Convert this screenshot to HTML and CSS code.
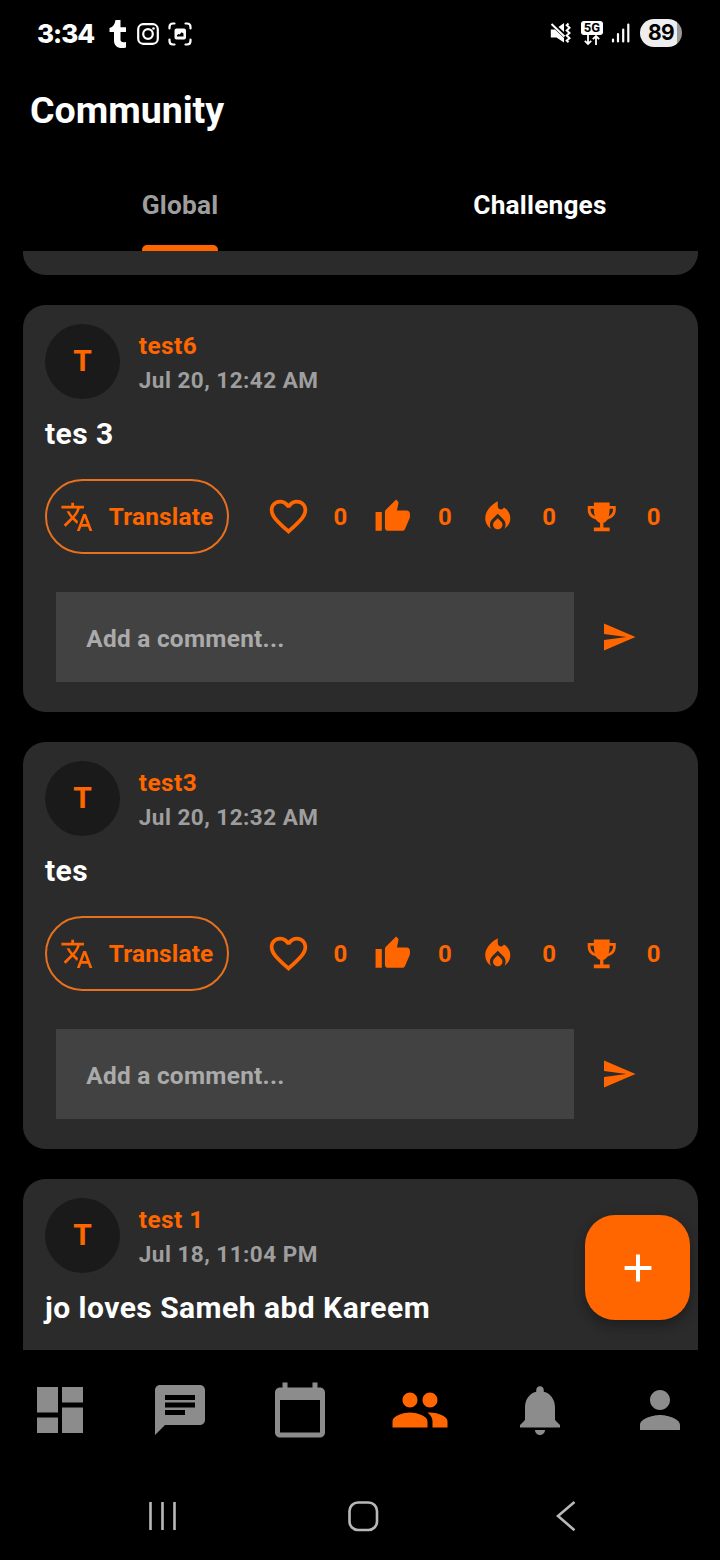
FILE: index.html
```html
<!DOCTYPE html>
<html lang="en">
<head>
<meta charset="utf-8">
<title>Community</title>
<link rel="stylesheet" href="styles.css">
</head>
<body>
<svg class="defs" width="0" height="0">
  <symbol id="translate" viewBox="0 0 24 24"><path d="M12.87 15.07l-2.54-2.51.03-.03c1.74-1.94 2.98-4.17 3.71-6.53H17V4h-7V2H8v2H1v1.99h11.17C11.5 7.92 10.44 9.75 9 11.35 8.07 10.32 7.3 9.19 6.69 8h-2c.73 1.63 1.73 3.17 2.98 4.56l-5.09 5.02L4 19l5-5 3.11 3.11.76-2.04zM18.5 10h-2L12 22h2l1.12-3h4.75L21 22h2l-4.5-12zm-2.62 7l1.62-4.33L19.12 17h-3.24z"/></symbol>
  <symbol id="heart" viewBox="0 0 24 24"><path d="M16.5 3c-1.74 0-3.41.81-4.5 2.09C10.91 3.81 9.24 3 7.5 3 4.42 3 2 5.42 2 8.5c0 3.78 3.4 6.86 8.55 11.54L12 21.35l1.45-1.32C18.6 15.36 22 12.28 22 8.5 22 5.42 19.58 3 16.5 3zm-4.4 15.55l-.1.1-.1-.1C7.14 14.24 4 11.39 4 8.5 4 6.5 5.5 5 7.5 5c1.54 0 3.04.99 3.57 2.36h1.87C13.46 5.99 14.96 5 16.5 5c2 0 3.5 1.5 3.5 3.5 0 2.89-3.14 5.74-7.9 10.05z"/></symbol>
  <symbol id="thumb" viewBox="0 0 24 24"><path d="M1 21h4V9H1v12zm22-11c0-1.1-.9-2-2-2h-6.31l.95-4.57.03-.32c0-.41-.17-.79-.44-1.06L14.17 1 7.59 7.59C7.22 7.95 7 8.45 7 9v10c0 1.1.9 2 2 2h9c.83 0 1.54-.5 1.84-1.22l3.02-7.05c.09-.23.14-.47.14-.73v-2z"/></symbol>
  <symbol id="fire" viewBox="0 0 24 24"><path d="M12 12.9l-2.13 2.09C9.31 15.55 9 16.28 9 17.06 9 18.68 10.35 20 12 20s3-1.32 3-2.94c0-.78-.31-1.52-.87-2.07L12 12.9z"/><path d="M16 6l-.44.55C14.38 8.02 12 7.19 12 5.3V2S4 6 4 13c0 2.92 1.56 5.47 3.89 6.86-.56-.79-.89-1.76-.89-2.8 0-1.32.52-2.56 1.47-3.5L12 10.1l3.53 3.47c.95.93 1.47 2.17 1.47 3.5 0 1.02-.31 1.96-.85 2.75 1.89-1.15 3.29-3.06 3.71-5.3.66-3.55-1.07-6.9-3.86-8.52z"/></symbol>
  <symbol id="trophy" viewBox="0 0 38 38"><path d="M11 4.600H27V8.200H33.200V12C33.200 17.500 29.500 20.700 25 21.700C23.500 23.700 22.300 24.600 20.700 25.200V30H27V33.800H11V30H17.300V25.200C15.700 24.600 14.500 23.700 13 21.700C8.500 20.700 4.800 17.500 4.800 12V8.200H11ZM7.600 11V12C7.600 15 9.300 17.300 12 18.400C11.200 16 11 13.500 11 11ZM30.400 11H27C27 13.500 26.800 16 26 18.400C28.700 17.300 30.400 15 30.400 12Z" fill-rule="evenodd"/></symbol>
  <symbol id="send" viewBox="0 0 24 24"><path d="M2.010 21L23 12 2.010 3 2 10l15 2-15 2z"/></symbol>
</svg>
<div class="screen">
  <header class="status">
    <div class="status-left">
      <span class="clock">3:34</span>
      <svg class="tumblr" viewBox="0 0 20 30" width="20" height="30"><path d="M7.500 1H12.500V8.200H18V13H12.500V20.500C12.500 23 14.500 23.800 18 23V28.400C11 30.500 6 27.500 6 21.500V13H1.500V9C5 8 7 5 7.500 1Z"/></svg>
      <svg class="insta" viewBox="0 0 22 22" width="22" height="22"><rect x="1.200" y="1.200" width="19.600" height="19.600" rx="5"/><circle cx="11" cy="11" r="4.800"/><circle class="dot" cx="16.500" cy="5.500" r="1.300"/></svg>
      <svg class="capture" viewBox="0 0 24 24" width="24" height="24"><path d="M1.500 6.500V5Q1.500 1.500 5 1.500H6.500M17.500 1.500H19Q22.500 1.500 22.500 5V6.500M22.500 17.500V19Q22.500 22.500 19 22.500H17.500M6.500 22.500H5Q1.500 22.500 1.500 19V17.500"/><path class="solid" d="M8.500 6.500h7.500q2 0 2 2v7q0 2-2 2h-7.500q-2 0-2-2v-7q0-2 2-2zM9 14.500h6.500v-3l-1.800-1.200-2.200 2.200-1.200-.6-1.300 1.300z" fill-rule="evenodd"/></svg>
    </div>
    <div class="status-right">
      <svg class="mute" viewBox="0 0 22 22" width="22" height="22"><path class="solid" d="M.8 7.500H5L14 16V20.500L6.500 15.500H.8ZM8.500 5L14 1V10Z"/><path d="M1.500 2L14.500 14.500M18.500 1.500l-1.800 1.800 2.800 2.500-2.800 2.600 2.800 2.600-2.800 2.600 2.800 2.600-2.800 2.300 1.800 1.800"/></svg>
      <div class="network">
        <span class="fiveg">5G</span>
        <svg viewBox="0 0 18 11" width="18" height="11"><path d="M5 0V9M1.800 5.800L5 9L8.200 5.800M13 10V1M9.800 4.200L13 1L16.200 4.200"/></svg>
      </div>
      <svg class="signal" viewBox="0 0 20 20" width="20" height="20"><path d="M2 16.500V18.500M7 11V18.500M12.200 6.500V18.500M17.300 1.500V18.500"/></svg>
      <span class="battery">89</span>
    </div>
  </header>
  <h1 class="title">Community</h1>
  <nav class="tabs">
    <div class="tab tab-active">Global</div>
    <div class="tab">Challenges</div>
  </nav>
  <main class="feed">
    <article class="card card-tail"></article>
    <article class="card">
      <div class="author"><span class="avatar">T</span><div class="who"><span class="name">test6</span><span class="date">Jul 20, 12:42 AM</span></div></div>
      <p class="body">tes 3</p>
      <div class="actions">
        <button class="translate"><svg><use href="#translate"/></svg><span>Translate</span></button>
        <div class="reaction"><svg class="large"><use href="#heart"/></svg><span>0</span></div>
        <div class="reaction"><svg><use href="#thumb"/></svg><span>0</span></div>
        <div class="reaction"><svg><use href="#fire"/></svg><span>0</span></div>
        <div class="reaction"><svg><use href="#trophy"/></svg><span>0</span></div>
      </div>
      <div class="comment"><div class="field"><span>Add a comment...</span></div><svg><use href="#send"/></svg></div>
    </article>
    <article class="card">
      <div class="author"><span class="avatar">T</span><div class="who"><span class="name">test3</span><span class="date">Jul 20, 12:32 AM</span></div></div>
      <p class="body">tes</p>
      <div class="actions">
        <button class="translate"><svg><use href="#translate"/></svg><span>Translate</span></button>
        <div class="reaction"><svg class="large"><use href="#heart"/></svg><span>0</span></div>
        <div class="reaction"><svg><use href="#thumb"/></svg><span>0</span></div>
        <div class="reaction"><svg><use href="#fire"/></svg><span>0</span></div>
        <div class="reaction"><svg><use href="#trophy"/></svg><span>0</span></div>
      </div>
      <div class="comment"><div class="field"><span>Add a comment...</span></div><svg><use href="#send"/></svg></div>
    </article>
    <article class="card">
      <div class="author"><span class="avatar">T</span><div class="who"><span class="name">test 1</span><span class="date">Jul 18, 11:04 PM</span></div></div>
      <p class="body">jo loves Sameh abd Kareem</p>
    </article>
    <button class="fab" aria-label="Add post"><svg viewBox="0 0 28 28" width="28" height="28"><path d="M14 .6V27.400M.6 14H27.400"/></svg></button>
  </main>
  <nav class="bottom">
    <svg viewBox="0 0 60 60"><path d="M7 7H28V32.500H7ZM32 7H53V22.500H32ZM7 37.500H28V53H7ZM32 27.500H53V53H32Z"/></svg>
    <svg viewBox="0 0 24 24"><path d="M20 2H4c-1.100 0-1.990.9-1.990 2L2 22l4-4h14c1.100 0 2-.9 2-2V4c0-1.100-.9-2-2-2zM6 9h12v2H6V9zm8 5H6v-2h8v2zm4-6H6V6h12v2z"/></svg>
    <svg viewBox="0 0 24 24"><path d="M20 3h-1V1h-2v2H7V1H5v2H4c-1.100 0-2 .9-2 2v16c0 1.100.9 2 2 2h16c1.100 0 2-.9 2-2V5c0-1.100-.9-2-2-2zm0 18H4V8h16v13z"/></svg>
    <svg class="current" viewBox="0 0 24 24"><path d="M16 11c1.660 0 2.990-1.340 2.990-3S17.660 5 16 5c-1.660 0-3 1.340-3 3s1.340 3 3 3zm-8 0c1.660 0 2.990-1.340 2.990-3S9.660 5 8 5C6.340 5 5 6.340 5 8s1.340 3 3 3zm0 2c-2.330 0-7 1.170-7 3.500V19h14v-2.500c0-2.330-4.670-3.500-7-3.500zm8 0c-.29 0-.62.02-.97.05 1.160.84 1.970 1.970 1.970 3.450V19h6v-2.500c0-2.330-4.670-3.500-7-3.500z"/></svg>
    <svg viewBox="0 0 24 24"><path d="M12 22c1.100 0 2-.9 2-2h-4c0 1.100.89 2 2 2zm6-6v-5c0-3.070-1.640-5.640-4.500-6.320V4c0-.83-.67-1.500-1.500-1.500s-1.500.67-1.500 1.500v.68C7.630 5.360 6 7.920 6 11v5l-2 2v1h16v-1l-2-2z"/></svg>
    <svg viewBox="0 0 24 24"><path d="M12 12c2.210 0 4-1.790 4-4s-1.790-4-4-4-4 1.790-4 4 1.790 4 4 4zm0 2c-2.670 0-8 1.340-8 4v2h16v-2c0-2.660-5.330-4-8-4z"/></svg>
  </nav>
  <footer class="system">
    <svg viewBox="0 0 32 32" width="32" height="32"><path d="M4.500 2V30M16.500 2V30M28.500 2V30"/></svg>
    <svg class="home" viewBox="0 0 32 32" width="32" height="32"><rect x="2.500" y="2.500" width="27.500" height="27.500" rx="8.500"/></svg>
    <svg viewBox="0 0 32 32" width="32" height="32"><path d="M23.500 2L7 16L23.500 30.200"/></svg>
  </footer>
</div>
</body>
</html>
```
FILE: styles.css
```css
* { box-sizing: border-box; }
body { margin: 0; background: #000; font-family: Roboto, "Liberation Sans", sans-serif; font-weight: 700; }
svg { display: block; flex: none; fill: currentColor; }
button { font: inherit; margin: 0; padding: 0; border: 0; }
.defs { position: absolute; }
.screen { width: 720px; height: 1560px; overflow: hidden; display: flex; flex-direction: column; background: #000; color: #fff; }

.status { height: 68px; flex: none; display: flex; justify-content: space-between; padding: 0 38px 0 37px; }
.status-left, .status-right { display: flex; align-items: center; }
.status-right { padding-bottom: 2px; }
.clock { font-family: Inter, sans-serif; font-weight: 800; font-size: 26px; line-height: 30px; width: 71px; letter-spacing: -1px; }
.tumblr { margin-right: 9px; }
.insta { fill: none; stroke: #fff; stroke-width: 2.2; margin-right: 8.500px; }
.insta .dot { fill: #fff; stroke: none; }
.capture { fill: none; stroke: #fff; stroke-width: 2.2; stroke-linecap: round; }
.capture .solid, .mute .solid { fill: #fff; stroke: none; }
.mute { fill: none; stroke: #fff; stroke-width: 2; margin-right: 9px; }
.network { width: 22px; height: 25px; display: flex; flex-direction: column; align-items: center; margin-right: 8px; }
.network svg { fill: none; stroke: #fff; stroke-width: 1.8; }
.fiveg { width: 22px; height: 14px; border-radius: 3px; background: #fff; color: #000; font: 700 13px/14px Roboto, sans-serif; text-align: center; letter-spacing: .2px; }
.signal { stroke: #fff; stroke-width: 2.2; stroke-linecap: round; margin-right: 9px; }
.battery { width: 42px; height: 28px; border-radius: 14px; background: linear-gradient(90deg, #eee 37px, #999 37px); color: #000; font: 700 21px/28px Inter, sans-serif; text-align: center; letter-spacing: -.7px; }

.title { margin: 0; height: 92px; flex: none; padding: 20px 30px 0; font-size: 37.5px; line-height: 44px; letter-spacing: 0; }
.tabs { height: 91px; flex: none; display: grid; grid-template-columns: 1fr 1fr; justify-items: center; }
.tab { height: 91px; line-height: 90px; font-size: 26.250px; letter-spacing: .19px; }
.tab-active { color: #9e9e9e; display: flex; flex-direction: column; }
.tab-active::after { content: ""; height: 6px; flex: none; margin-top: -5px; border-radius: 5px 5px 0 0; background: #ff6600; }

.feed { position: relative; height: 1099px; flex: none; overflow: hidden; padding: 0 22.500px; display: flex; flex-direction: column; gap: 30px; }
.card { height: 407px; flex: none; border-radius: 22.500px; background: #2b2b2b; padding: 18.750px 22.500px; }
.card-tail { height: 24px; padding: 0; border-radius: 0 0 22.500px 22.500px; }
.author { display: flex; gap: 18.750px; }
.avatar { width: 75px; height: 75px; border-radius: 50%; background: #1a1a1a; color: #ff6600; font-size: 30px; line-height: 73px; text-align: center; }
.who { display: flex; flex-direction: column; padding-top: 4.500px; }
.name { color: #ff6600; font-size: 24.400px; line-height: 36px; letter-spacing: .45px; }
.date { color: #9e9e9e; font-size: 22.500px; line-height: 33px; letter-spacing: .48px; }
.body { margin: 14px 0 0; font-size: 30px; line-height: 42px; letter-spacing: .47px; }
.actions { display: flex; align-items: center; height: 75px; margin-top: 24.250px; color: #ff6600; }
.translate { width: 183.500px; height: 75px; flex: none; border: 2px solid #e8701f; border-radius: 37.500px; background: none; color: #ff6600; display: flex; align-items: center; padding-left: 13px; gap: 15px; font-size: 24.400px; letter-spacing: .19px; margin-right: 15px; }
.translate svg { width: 33.750px; height: 33.750px; }
.reaction { width: 104.400px; flex: none; display: flex; align-items: center; font-size: 24px; }
.reaction svg { width: 37.500px; height: 37.500px; margin: 0 26.250px 0 26.250px; }
.reaction svg.large { width: 45px; height: 45px; margin: 0 22.500px 0 22.500px; }
.comment { display: flex; align-items: center; margin: 38.250px 0 0 11.250px; color: #ff6600; }
.field { width: 517.500px; height: 90px; background: #424242; color: #aaa; font-size: 24.400px; line-height: 93px; padding-left: 30px; letter-spacing: .27px; }
.comment svg { width: 36px; height: 36px; margin-left: 27px; }
.fab { position: absolute; right: 30px; bottom: 30px; width: 105px; height: 105px; border-radius: 30px; background: #ff6600; color: #fff; display: grid; place-items: center; box-shadow: 0 7px 12px rgba(0,0,0,.22), 0 2px 14px rgba(0,0,0,.1); }
.fab svg { stroke: #fff; stroke-width: 4; }

.bottom { height: 120px; flex: none; display: grid; grid-template-columns: repeat(6, 120px); place-items: center; color: #8c8c8c; }
.bottom svg { width: 60px; height: 60px; }
.bottom .current { color: #ff6600; }
.system { height: 90px; flex: none; display: flex; justify-content: space-between; align-items: center; padding: 1px 137px 0 146px; }
.system svg { fill: none; stroke: #b8b8b8; stroke-width: 2.6; }
.system .home { margin: 0 2px 0 -2px; }
```
